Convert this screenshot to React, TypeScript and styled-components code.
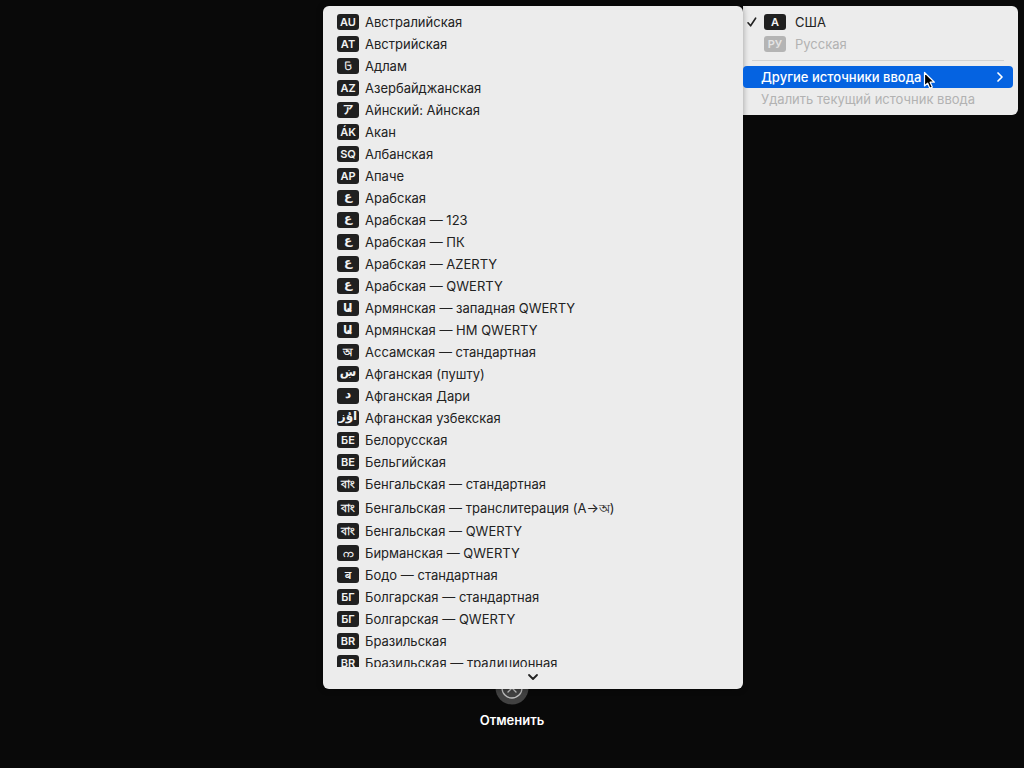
import React from "react";
import styled, { createGlobalStyle, css } from "styled-components";

const GlobalStyle = createGlobalStyle`
  *, *::before, *::after { box-sizing: border-box; }
  body {
    margin: 0;
    background: #090909;
    font-family: Inter, "Noto Sans", "DejaVu Sans", "Noto Sans CJK JP", sans-serif;
    font-size: 13px;
    line-height: 22px;
    color: #222;
  }
  button {
    margin: 0;
    border: 0;
    padding: 0;
    background: none;
    font: inherit;
    color: inherit;
    text-align: left;
  }
`;

const Screen = styled.main`
  position: relative;
  min-height: 100vh;
  display: flex;
  flex-direction: column;
  justify-content: flex-end;
  align-items: center;
  padding-bottom: 37px;
  overflow: hidden;
`;

const CancelButton = styled.button`
  display: flex;
  flex-direction: column;
  align-items: center;
  gap: 4px;
  color: #fff;
  font-weight: 600;
`;

const Menus = styled.div`
  position: absolute;
  inset: 6px 6px 79px auto;
  display: flex;
  align-items: flex-start;
`;

const SourcesMenu = styled.div`
  z-index: 1;
  display: flex;
  flex-direction: column;
  width: 420px;
  max-height: 100%;
  padding-top: 5px;
  border-radius: 6px;
  background: #ececec;
  box-shadow: 0 0 6px rgba(0, 0, 0, 0.35);
`;

const SourceList = styled.ul`
  flex: 0 1 auto;
  min-height: 0;
  margin: 0;
  padding: 0;
  list-style: none;
  overflow: hidden;
`;

const SourceButton = styled.button<{ $tall?: boolean }>`
  display: flex;
  align-items: center;
  gap: 6px;
  width: 100%;
  height: ${(p) => (p.$tall ? 25 : 22)}px;
  padding: 0 14px;
  white-space: nowrap;
`;

type Script = "latin" | "arabic" | "armenian" | "thin";

const scriptFont = {
  latin: css`
    font-size: 11px;
    font-weight: 600;
  `,
  arabic: css`
    padding-bottom: 4px;
    font-family: "DejaVu Sans", sans-serif;
    font-size: 12px;
    line-height: 12px;
    font-weight: 700;
  `,
  armenian: css`
    font-family: "DejaVu Sans", sans-serif;
    font-size: 12px;
    font-weight: 700;
  `,
  thin: css`
    font-size: 12px;
    font-weight: 400;
  `,
};

const Badge = styled.span<{ $muted?: boolean; $script?: Script }>`
  flex: none;
  display: flex;
  align-items: center;
  justify-content: center;
  width: 22px;
  height: 16px;
  border-radius: 3px;
  overflow: hidden;
  background: ${(p) => (p.$muted ? "#b4b4b4" : "#202020")};
  color: ${(p) => (p.$muted ? "#e4e4e4" : "#f2f2f2")};
  line-height: 16px;
  ${(p) => scriptFont[p.$script ?? "latin"]}
`;

const ScrollDown = styled.button`
  flex: none;
  display: flex;
  align-items: center;
  justify-content: center;
  height: 22px;
  padding-bottom: 2px;
`;

const InputMenu = styled.div`
  width: 275px;
  padding: 5px 5px 5px 0;
  border-radius: 0 6px 6px 0;
  background: #ececec;
`;

const itemState = {
  normal: css`color: #222;`,
  muted: css`color: #b2b2b2;`,
  active: css`
    position: relative;
    z-index: 2;
    background: #0563e1;
    color: #fff;
    font-weight: 500;
  `,
};

const MenuItem = styled.button<{ $state?: keyof typeof itemState; $plain?: boolean }>`
  display: flex;
  align-items: center;
  width: 100%;
  height: 22px;
  padding: 0 9px 0 ${(p) => (p.$plain ? 18 : 4)}px;
  border-radius: 4px;
  white-space: nowrap;
  ${(p) => itemState[p.$state ?? "normal"]}
`;

const CheckSlot = styled.span`
  display: flex;
  width: 17px;
`;

const ItemName = styled.span`
  margin-left: 9px;
`;

const Grow = styled.span`
  flex: 1;
`;

const Separator = styled.hr`
  margin: 5px 9px;
  border: 0;
  border-top: 1px solid #d2d2d2;
`;

const Pointer = styled.svg`
  position: absolute;
  top: 71px;
  right: 88px;
  z-index: 2;
`;

type Source = { code: string; name: string; script?: Script; tall?: boolean };

const sources: Source[] = [
  { code: "AU", name: "Австралийская" },
  { code: "AT", name: "Австрийская" },
  { code: "𞤀", name: "Адлам", script: "thin" },
  { code: "AZ", name: "Азербайджанская" },
  { code: "ア", name: "Айнский: Айнская" },
  { code: "ÁK", name: "Акан" },
  { code: "SQ", name: "Албанская" },
  { code: "AP", name: "Апаче" },
  { code: "ع", name: "Арабская", script: "arabic" },
  { code: "ع", name: "Арабская — 123", script: "arabic" },
  { code: "ع", name: "Арабская — ПК", script: "arabic" },
  { code: "ع", name: "Арабская — AZERTY", script: "arabic" },
  { code: "ع", name: "Арабская — QWERTY", script: "arabic" },
  { code: "Ա", name: "Армянская — западная QWERTY", script: "armenian" },
  { code: "Ա", name: "Армянская — HM QWERTY", script: "armenian" },
  { code: "অ", name: "Ассамская — стандартная" },
  { code: "ښ", name: "Афганская (пушту)", script: "arabic" },
  { code: "د", name: "Афганская Дари", script: "arabic" },
  { code: "اوُز", name: "Афганская узбекская", script: "arabic" },
  { code: "БЕ", name: "Белорусская" },
  { code: "BE", name: "Бельгийская" },
  { code: "বাং", name: "Бенгальская — стандартная" },
  { code: "বাং", name: "Бенгальская — транслитерация (A→অ)", tall: true },
  { code: "বাং", name: "Бенгальская — QWERTY" },
  { code: "က", name: "Бирманская — QWERTY" },
  { code: "ब", name: "Бодо — стандартная" },
  { code: "БГ", name: "Болгарская — стандартная" },
  { code: "БГ", name: "Болгарская — QWERTY" },
  { code: "BR", name: "Бразильская" },
  { code: "BR", name: "Бразильская — традиционная" },
];

const CancelIcon = () => (
  <svg width="34" height="34" viewBox="0 0 34 34" fill="none" aria-hidden="true">
    <circle cx="17" cy="17" r="16.5" fill="#414141" />
    <circle cx="17" cy="17" r="10" stroke="#bdbdbd" strokeWidth="1.3" />
    <path d="M13 13l8 8M21 13l-8 8" stroke="#bdbdbd" strokeWidth="1.3" strokeLinecap="round" />
  </svg>
);

export default function App() {
  return (
    <>
      <GlobalStyle />
      <Screen>
        <CancelButton type="button">
          <CancelIcon />
          Отменить
        </CancelButton>
        <Menus>
          <SourcesMenu>
            <SourceList>
              {sources.map((s) => (
                <li key={s.name}>
                  <SourceButton type="button" $tall={s.tall}>
                    <Badge $script={s.script}>{s.code}</Badge>
                    {s.name}
                  </SourceButton>
                </li>
              ))}
            </SourceList>
            <ScrollDown type="button" aria-label="Прокрутить вниз">
              <svg width="12" height="8" viewBox="0 0 12 8" fill="none" aria-hidden="true">
                <path d="M2 2l4 4 4-4" stroke="#222" strokeWidth="1.8" strokeLinecap="round" strokeLinejoin="round" />
              </svg>
            </ScrollDown>
          </SourcesMenu>
          <InputMenu>
            <MenuItem type="button">
              <CheckSlot>
                <svg width="10" height="10" viewBox="0 0 10 10" fill="none" aria-hidden="true">
                  <path d="M1 5.8L3.6 8.8L8.6 1.2" stroke="#222" strokeWidth="1.6" strokeLinecap="round" strokeLinejoin="round" />
                </svg>
              </CheckSlot>
              <Badge>A</Badge>
              <ItemName>США</ItemName>
            </MenuItem>
            <MenuItem type="button" $state="muted" disabled>
              <CheckSlot />
              <Badge $muted>РУ</Badge>
              <ItemName>Русская</ItemName>
            </MenuItem>
            <Separator />
            <MenuItem type="button" $state="active" $plain>
              Другие источники ввода
              <Grow />
              <svg width="8" height="12" viewBox="0 0 8 12" fill="none" aria-hidden="true">
                <path d="M2 2l4 4-4 4" stroke="#fff" strokeWidth="1.7" strokeLinecap="round" strokeLinejoin="round" />
              </svg>
            </MenuItem>
            <MenuItem type="button" $state="muted" $plain disabled>
              Удалить текущий источник ввода
            </MenuItem>
          </InputMenu>
        </Menus>
        <Pointer width="13" height="19" viewBox="0 0 13 19" aria-hidden="true">
          <path
            d="M1.5 1.5V15L4.6 12.1L6.8 17.2L9.3 16.1L7.1 11.2H11.4Z"
            fill="#000"
            stroke="#fff"
            strokeWidth="1.2"
            strokeLinejoin="round"
          />
        </Pointer>
      </Screen>
    </>
  );
}
